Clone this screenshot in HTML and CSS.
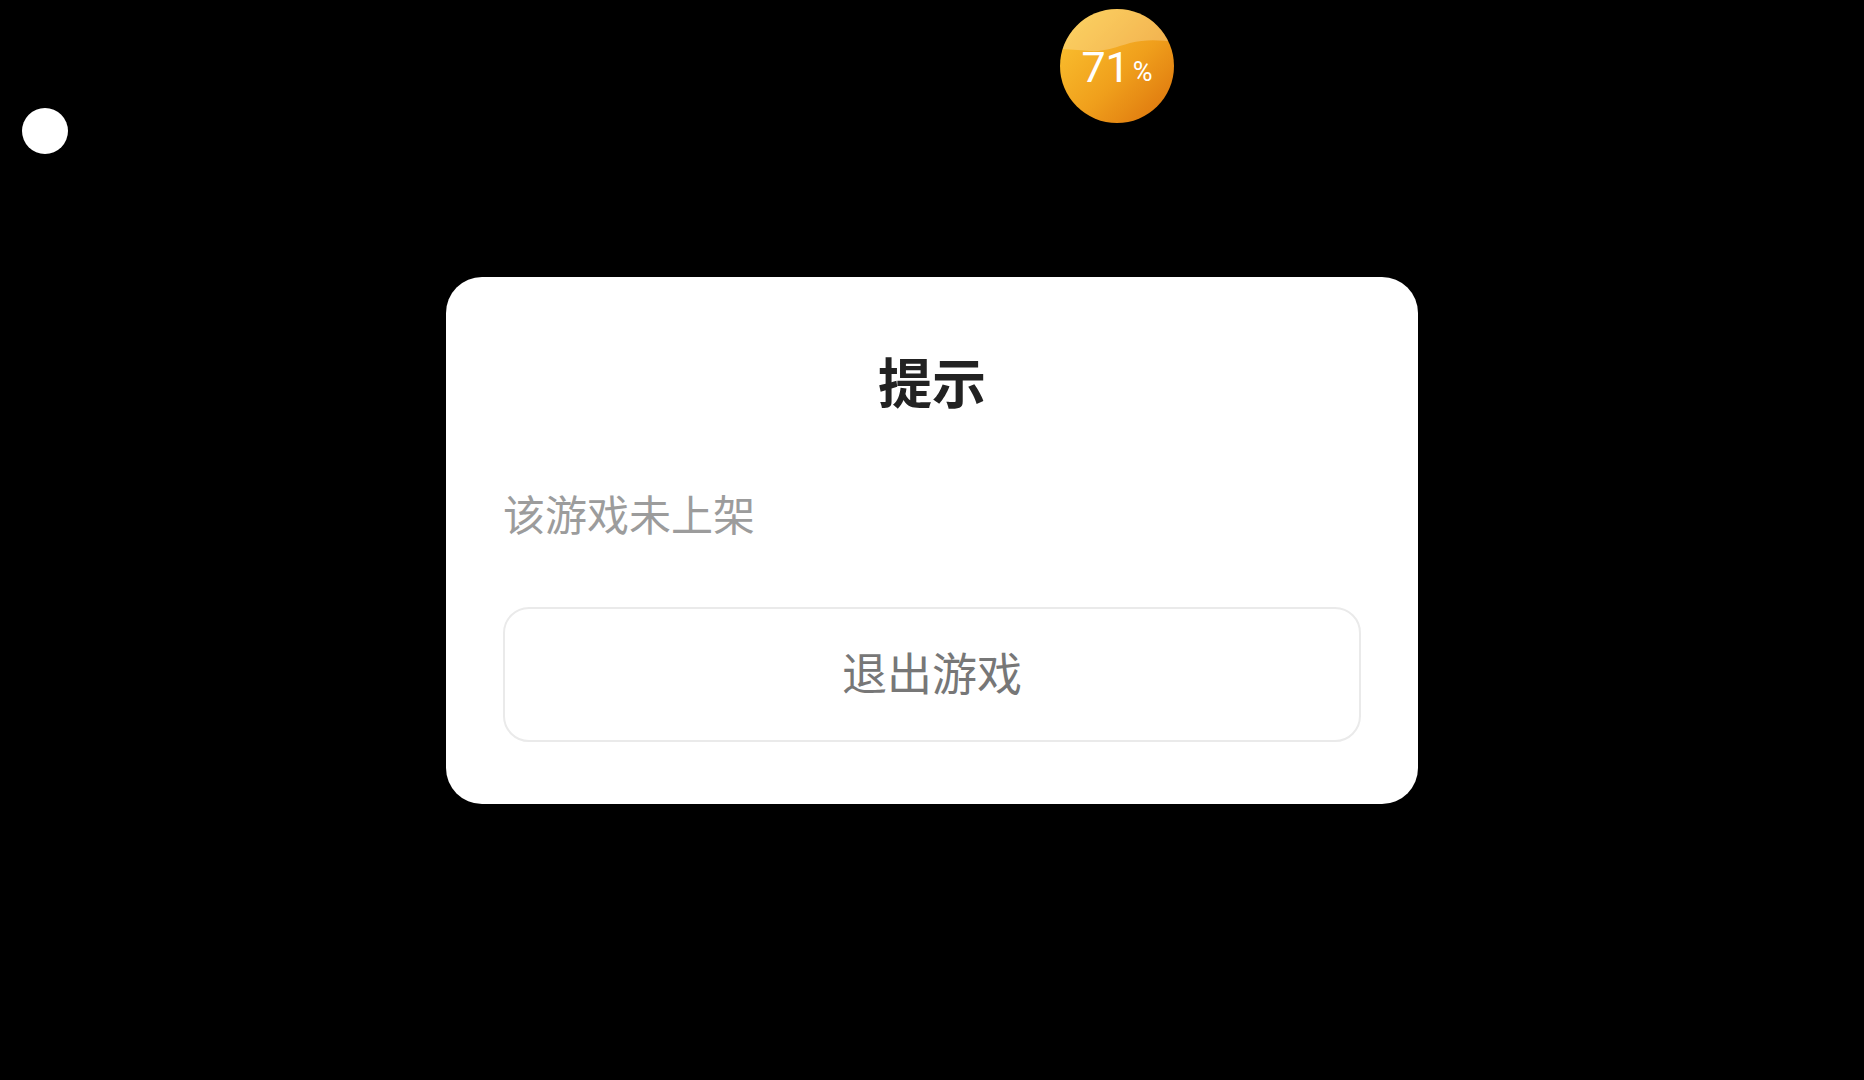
FILE: index.html
```html
<!DOCTYPE html>
<html lang="zh-CN">
<head>
    <meta charset="UTF-8">
    <meta name="viewport" content="width=device-width, initial-scale=1.0">
    <title>提示</title>
    <link rel="stylesheet" href="styles.css">
</head>
<body>

    <!-- floating handle on the left edge -->
    <div class="float-dot"></div>

    <!-- battery / progress ball -->
    <div class="level-ball">
        <svg class="level-ball-bg" viewBox="0 0 114 114" width="114" height="114">
            <defs>
                <linearGradient id="liquid" x1="0" y1="0" x2="1" y2="1">
                    <stop offset="0" stop-color="#fdc834"/>
                    <stop offset="0.55" stop-color="#f0a01c"/>
                    <stop offset="1" stop-color="#db700b"/>
                </linearGradient>
                <clipPath id="ballClip">
                    <circle cx="57" cy="57" r="57"/>
                </clipPath>
            </defs>
            <circle cx="57" cy="57" r="57" fill="url(#liquid)"/>
            <path clip-path="url(#ballClip)" fill="#fff" opacity="0.24"
                  d="M0 0 H114 V33 C100 31 86 30 70 34 C56 38 44 43 30 42 C18 41 8 40 0 40 Z"/>
        </svg>
        <div class="level-text">71<span class="level-unit">%</span></div>
    </div>

    <!-- dialog -->
    <div class="overlay">
        <div class="dialog">
            <h2 class="dialog-title">提示</h2>
            <p class="dialog-msg">该游戏未上架</p>
            <button class="dialog-btn">退出游戏</button>
        </div>
    </div>

</body>
</html>
```

FILE: styles.css
```css
html, body {
    margin: 0;
    height: 100%;
}
body {
    background: #000;
    font-family: "Noto Sans CJK SC", "Noto Sans", sans-serif;
    overflow: hidden;
}
.float-dot {
    position: absolute;
    left: 22px;
    top: 108px;
    width: 46px;
    height: 46px;
    border-radius: 50%;
    background: #fff;
}
.level-ball {
    position: absolute;
    left: 1060px;
    top: 9px;
    width: 114px;
    height: 114px;
}
.level-ball-bg {
    display: block;
}
.level-text {
    position: absolute;
    inset: 0;
    display: flex;
    align-items: center;
    justify-content: center;
    color: #fff;
    font-family: Roboto, "Noto Sans", sans-serif;
    font-size: 43px;
    line-height: 1;
    padding-top: 2px;
}
.level-unit {
    font-size: 27px;
    margin-left: 3px;
    align-self: center;
    padding-top: 10px;
}
.overlay {
    height: 100%;
    display: flex;
    align-items: center;
    justify-content: center;
}
.dialog {
    width: 972px;
    box-sizing: border-box;
    padding: 77px 57px 62px;
    background: #fff;
    border-radius: 36px;
    display: flex;
    flex-direction: column;
}
.dialog-title {
    margin: 0;
    font-size: 54px;
    line-height: 54px;
    font-weight: 700;
    color: #222;
    text-align: center;
}
.dialog-msg {
    margin: 84px 0 0;
    font-size: 42px;
    line-height: 42px;
    color: #9c9c9c;
}
.dialog-btn {
    margin-top: 73px;
    height: 135px;
    padding: 0 0 6px;
    border: 2px solid #eaeaea;
    border-radius: 26px;
    background: #fff;
    font-family: inherit;
    font-size: 45px;
    color: #777;
    cursor: pointer;
}
```
